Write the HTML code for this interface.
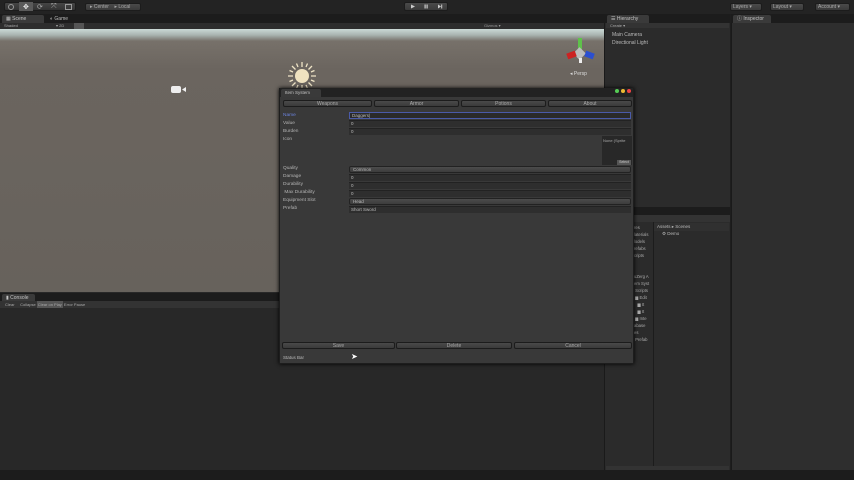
<!DOCTYPE html>
<html><head><meta charset="utf-8"><style>
*{margin:0;padding:0;box-sizing:border-box}
body{width:854px;height:480px;background:#1e1e1e;position:relative;overflow:hidden;font-family:"Liberation Sans",sans-serif;font-size:5px;color:#b8b8b8}
.a{position:absolute}
.btn{position:absolute;background:linear-gradient(#4a4a4a,#3a3a3a);border:1px solid #1c1c1c;border-radius:2px;color:#aaa;text-align:center;line-height:6px;font-size:5px}
.fld{position:absolute;background:#2e2e2e;border-top:1px solid #222;height:7px;left:349px;width:282px;font-size:4.5px;line-height:6px;padding-left:2px;color:#bbb}
.pop{position:absolute;background:linear-gradient(#4c4c4c,#3c3c3c);border:1px solid #222;border-radius:2px;height:7px;left:349px;width:282px;font-size:4.5px;line-height:5px;padding-left:3px;color:#bbb}
.lbl{position:absolute;left:283px;font-size:4.8px;color:#b4b4b4}
.tab{position:absolute;background:#3a3a3a;border-radius:2px 2px 0 0;color:#c4c4c4;font-size:5px;line-height:8px;padding-left:4px}
</style></head><body>
<div class="a" style="left:0;top:0;width:854px;height:14px;background:#232323"></div>
<div class="btn" style="left:4px;top:2px;width:72px;height:9px;background:linear-gradient(#454545,#333)"></div>
<div class="a" style="left:19px;top:2px;width:14px;height:9px;background:#5a5a5a"></div>
<div class="a" style="left:8px;top:4px;width:6px;height:6px;border:1px solid #999;border-radius:50%"></div>
<div class="a" style="left:23px;top:3px;color:#eee;font-size:7px">✥</div>
<div class="a" style="left:37px;top:3px;color:#aaa;font-size:7px">⟳</div>
<div class="a" style="left:51px;top:3px;color:#aaa;font-size:7px">⤧</div>
<div class="a" style="left:65px;top:4px;width:7px;height:6px;border:1px solid #999"></div>
<div class="btn" style="left:85px;top:3px;width:56px;height:8px;font-size:5px;text-align:left;padding-left:4px">▸ Center &nbsp;&nbsp;&nbsp;▸ Local</div>
<div class="btn" style="left:404px;top:2px;width:44px;height:9px"></div>
<svg class="a" style="left:404px;top:2px" width="44" height="9"><path d="M7 2.5L11 4.5L7 6.5Z" fill="#ccc"/><rect x="20.5" y="2.5" width="1.2" height="4" fill="#ccc"/><rect x="22.5" y="2.5" width="1.2" height="4" fill="#ccc"/><path d="M34 2.5L37 4.5L34 6.5Z" fill="#ccc"/><rect x="37.2" y="2.5" width="1" height="4" fill="#ccc"/></svg>
<div class="btn" style="left:730px;top:3px;width:32px;height:8px;font-size:5px;text-align:left;padding-left:2px">Layers ▾</div>
<div class="btn" style="left:770px;top:3px;width:34px;height:8px;font-size:5px;text-align:left;padding-left:2px">Layout ▾</div>
<div class="btn" style="left:815px;top:3px;width:35px;height:8px;font-size:5px;text-align:left;padding-left:2px">Account ▾</div>

<div class="a" style="left:0;top:14px;width:604px;height:9px;background:#1c1c1c"></div>
<div class="tab" style="left:2px;top:15px;width:42px;height:8px">▦ Scene</div>
<div class="a" style="left:50px;top:15px;color:#bbb;line-height:8px">◐ Game</div>
<div class="a" style="left:0;top:23px;width:604px;height:6px;background:#2d2d2d;font-size:4px;line-height:6px;color:#aaa;padding-left:4px">Shaded</div>
<div class="a" style="left:56px;top:23px;font-size:4px;line-height:6px;color:#aaa">▾ 2D</div>
<div class="a" style="left:74px;top:23px;width:10px;height:6px;background:#555"></div>
<div class="a" style="left:484px;top:23px;font-size:4px;line-height:6px;color:#999">Gizmos ▾</div>
<div class="a" style="left:0;top:29px;width:604px;height:263px;background:linear-gradient(#cbd9d6 0px,#a9b4b0 6px,#77716a 12px,#6b655f 40px,#67625c 263px)"></div>
<div class="a" style="left:171px;top:86px;width:10px;height:7px;background:#eee;border-radius:2px"></div>
<div class="a" style="left:182px;top:87px;width:4px;height:5px;background:#eee;clip-path:polygon(0 50%,100% 0,100% 100%)"></div>
<svg class="a" style="left:287px;top:61px" width="30" height="30" viewBox="0 0 30 30"><g stroke="#efe4c6" stroke-width="1.3"><path d="M15 1V6M15 24V29M1 15H6M24 15H29M5 5L8.5 8.5M21.5 21.5L25 25M25 5L21.5 8.5M8.5 21.5L5 25M9.5 2.5L11 6M19 24L20.5 27.5M2.5 9.5L6 11M24 19L27.5 20.5M20.5 2.5L19 6M11 24L9.5 27.5M27.5 9.5L24 11M6 19L2.5 20.5"/></g><circle cx="15" cy="15" r="7" fill="#efe2c0"/></svg>
<div class="a" style="left:578px;top:38px;width:4px;height:12px;background:#5ec24a"></div>
<div class="a" style="left:575px;top:49px;width:9px;height:9px;background:#bbb;transform:rotate(45deg)"></div>
<div class="a" style="left:567px;top:52px;width:9px;height:6px;background:#c22;transform:rotate(-20deg)"></div>
<div class="a" style="left:585px;top:52px;width:9px;height:6px;background:#2b4fd0;transform:rotate(20deg)"></div>
<div class="a" style="left:579px;top:58px;width:3px;height:5px;background:#eee"></div>
<div class="a" style="left:570px;top:71px;color:#ddd;font-size:5px">◂ Persp</div>

<div class="a" style="left:0;top:292px;width:604px;height:188px;background:#282828"></div>
<div class="a" style="left:0;top:293px;width:604px;height:8px;background:#1c1c1c"></div>
<div class="tab" style="left:2px;top:294px;width:33px;height:8px">▮ Console</div>
<div class="a" style="left:0;top:301px;width:604px;height:7px;background:#333;font-size:4px;line-height:7px;color:#aaa;padding-left:5px;white-space:nowrap">Clear &nbsp;&nbsp;&nbsp; Collapse <span style="background:#555;padding:1px">Clear on Play</span> Error Pause</div>

<div class="a" style="left:604px;top:14px;width:126px;height:466px;background:#2b2b2b;border-left:1px solid #1a1a1a"></div>
<div class="a" style="left:604px;top:14px;width:126px;height:9px;background:#1c1c1c"></div>
<div class="tab" style="left:607px;top:15px;width:42px;height:8px">☰ Hierarchy</div>
<div class="a" style="left:606px;top:23px;width:123px;height:5px;background:#333;font-size:4px;line-height:5px;padding-left:4px;color:#aaa">Create ▾</div>
<div class="a" style="left:612px;top:32px;color:#bbb;line-height:7.5px">Main Camera<br>Directional Light</div>
<div class="a" style="left:604px;top:207px;width:126px;height:8px;background:#1c1c1c"></div>
<div class="a" style="left:604px;top:215px;width:126px;height:7px;background:#333"></div>
<div class="a" style="left:653px;top:222px;width:1px;height:245px;background:#1c1c1c"></div>
<div class="a" style="left:654px;top:223px;width:75px;height:8px;background:#303030;font-size:4.5px;line-height:8px;padding-left:3px;color:#bbb">Assets ▸ Scenes</div>
<div class="a" style="left:662px;top:231px;font-size:4.5px;color:#bbb">⚙ Demo</div>
<div class="a" style="left:634px;top:224px;font-size:4.2px;line-height:7px;color:#aaa;white-space:pre">res
laterials
lodels
refabs
cripts


uZerg A
em Syst
 Scripts
 ▆ Edit
   ▆ It
   ▆ It
 ▆ Inte
abase
es
 Prefab</div>
<div class="a" style="left:606px;top:466px;width:123px;height:4px;background:#333"></div>
<div class="a" style="left:731px;top:14px;width:123px;height:466px;background:#2e2e2e;border-left:1px solid #1a1a1a"></div>
<div class="a" style="left:731px;top:14px;width:123px;height:9px;background:#1c1c1c"></div>
<div class="tab" style="left:733px;top:15px;width:38px;height:8px">ⓘ Inspector</div>
<div class="a" style="left:0;top:470px;width:854px;height:10px;background:#1c1c1c"></div>

<div class="a" style="left:279px;top:88px;width:355px;height:276px;background:#393939;border:1px solid #1d1d1d;box-shadow:0 0 4px #000"></div>
<div class="a" style="left:280px;top:88px;width:353px;height:9px;background:#222"></div>
<div class="tab" style="left:281px;top:89px;width:40px;height:8px;background:#3a3a3a;font-size:4.5px">Item System</div>
<div class="a" style="left:615px;top:89px;width:4px;height:4px;border-radius:50%;background:#5c5"></div>
<div class="a" style="left:621px;top:89px;width:4px;height:4px;border-radius:50%;background:#eb3"></div>
<div class="a" style="left:627px;top:89px;width:4px;height:4px;border-radius:50%;background:#e44"></div>
<div class="btn" style="left:283px;top:100px;width:89px;height:7px">Weapons</div>
<div class="btn" style="left:374px;top:100px;width:85px;height:7px">Armor</div>
<div class="btn" style="left:461px;top:100px;width:85px;height:7px">Potions</div>
<div class="btn" style="left:548px;top:100px;width:84px;height:7px">About</div>
<div class="lbl" style="top:113px;color:#6c84e0">Name</div>
<div class="fld" style="top:112px;background:#2a2a2a;border:1px solid #4a5aa8">Daggers|</div>
<div class="lbl" style="top:121px">Value</div><div class="fld" style="top:120px">0</div>
<div class="lbl" style="top:129px">Burden</div><div class="fld" style="top:128px">0</div>
<div class="lbl" style="top:137px">Icon</div>
<div class="a" style="left:602px;top:136px;width:30px;height:29px;background:#282828;font-size:4px;color:#aaa;padding:2px 1px">None (Sprite</div>
<div class="a" style="left:617px;top:160px;width:14px;height:5px;background:#555;font-size:3.5px;color:#ccc;text-align:center">Select</div>
<div class="lbl" style="top:166px">Quality</div><div class="pop" style="top:166px">Common</div>
<div class="lbl" style="top:174px">Damage</div><div class="fld" style="top:174px">0</div>
<div class="lbl" style="top:182px">Durability</div><div class="fld" style="top:182px">0</div>
<div class="lbl" style="top:190px">&nbsp;Max Durability</div><div class="fld" style="top:190px">0</div>
<div class="lbl" style="top:198px">Equipment Slot</div><div class="pop" style="top:198px">Head</div>
<div class="lbl" style="top:206px">Prefab</div><div class="fld" style="top:206px">Short Sword</div>
<div class="btn" style="left:282px;top:342px;width:113px;height:7px">Save</div>
<div class="btn" style="left:396px;top:342px;width:116px;height:7px">Delete</div>
<div class="btn" style="left:514px;top:342px;width:118px;height:7px">Cancel</div>
<div class="a" style="left:283px;top:355px;font-size:4.5px;color:#bbb">Status Bar</div>
<div class="a" style="left:351px;top:352px;color:#fff;font-size:8px">➤</div>
</body></html>
